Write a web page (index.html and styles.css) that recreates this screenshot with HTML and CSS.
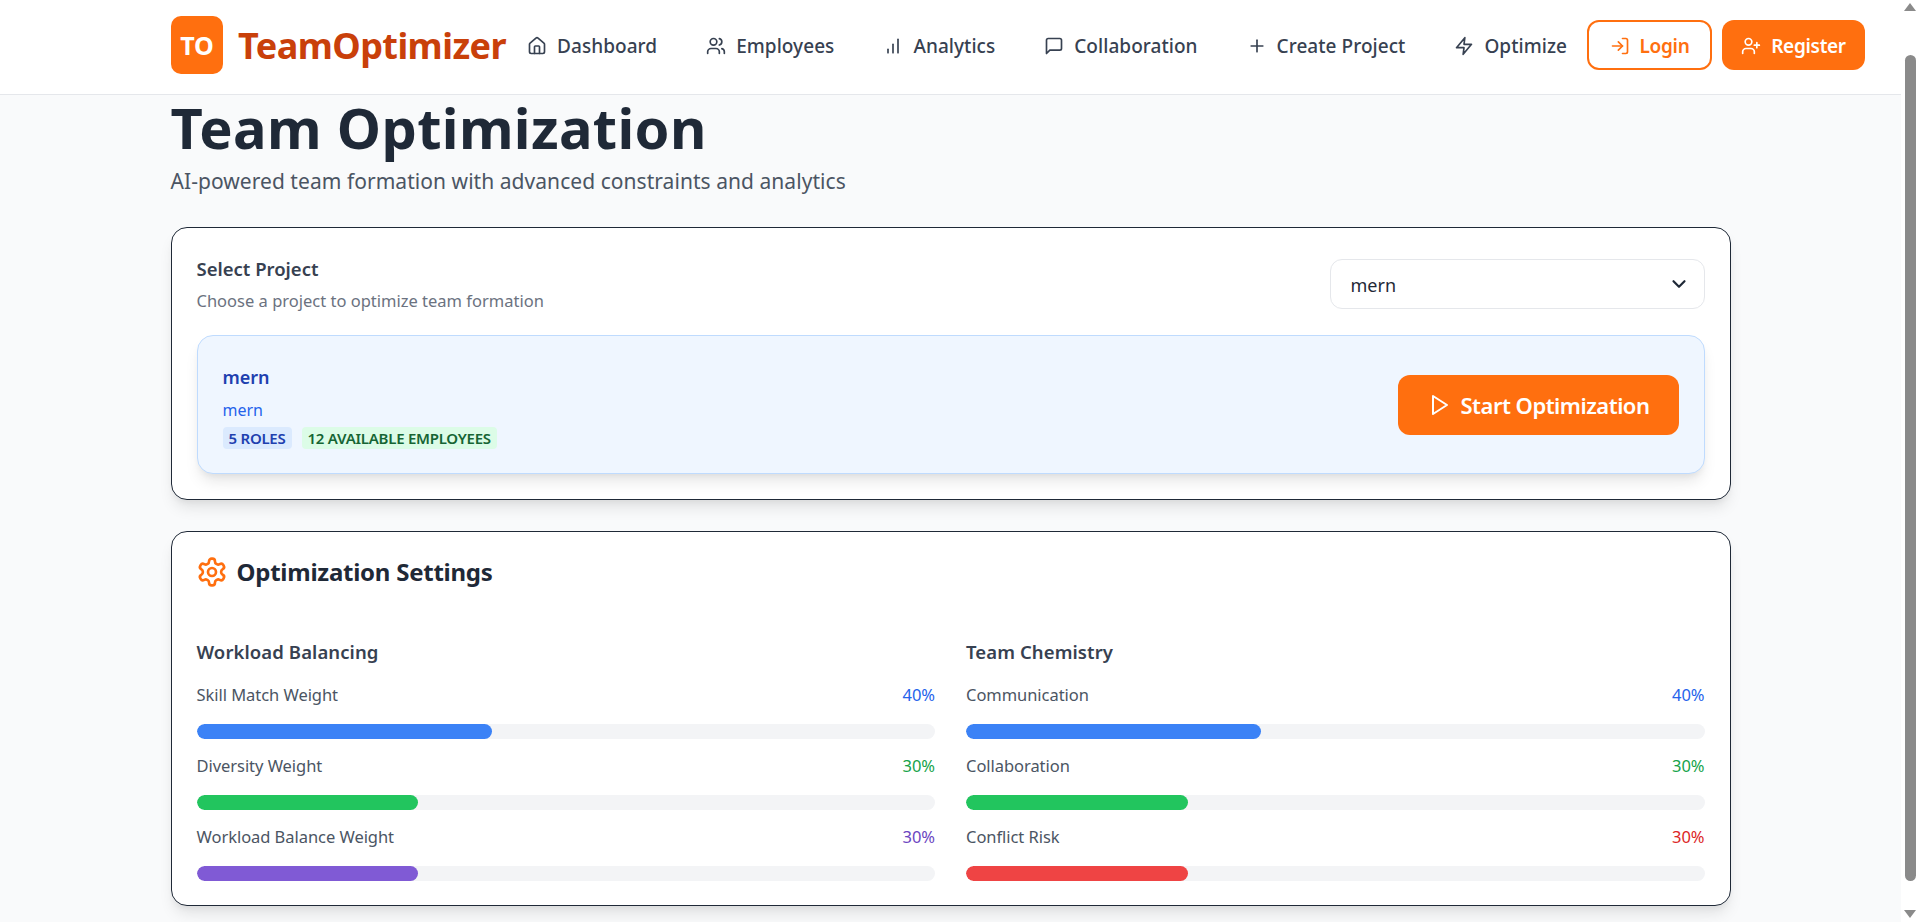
FILE: index.html
```html
<!DOCTYPE html>
<html>

<head>
  <title>TeamOptimizer</title>
  <link rel="stylesheet" href="styles.css">
</head>

<body>
  <div class="page">
    <header class="topbar">
      <a class="brand" href="#">
        <span class="brand-mark">TO</span>
        <span class="brand-name">TeamOptimizer</span>
      </a>
      <nav class="nav">
        <a class="nav-link" href="#">
          <svg class="icon" viewBox="0 0 24 24"><path d="M15 21v-8a1 1 0 0 0-1-1h-4a1 1 0 0 0-1 1v8"/><path d="M3 10a2 2 0 0 1 .709-1.528l7-5.999a2 2 0 0 1 2.582 0l7 5.999A2 2 0 0 1 21 10v9a2 2 0 0 1-2 2H5a2 2 0 0 1-2-2z"/></svg>
          Dashboard
        </a>
        <a class="nav-link" href="#">
          <svg class="icon" viewBox="0 0 24 24"><path d="M16 21v-2a4 4 0 0 0-4-4H6a4 4 0 0 0-4 4v2"/><circle cx="9" cy="7" r="4"/><path d="M22 21v-2a4 4 0 0 0-3-3.87"/><path d="M16 3.13a4 4 0 0 1 0 7.75"/></svg>
          Employees
        </a>
        <a class="nav-link" href="#">
          <svg class="icon" viewBox="0 0 24 24"><path d="M12 20V10"/><path d="M18 20V4"/><path d="M6 20v-4"/></svg>
          Analytics
        </a>
        <a class="nav-link" href="#">
          <svg class="icon" viewBox="0 0 24 24"><path d="M21 15a2 2 0 0 1-2 2H7l-4 4V5a2 2 0 0 1 2-2h14a2 2 0 0 1 2 2z"/></svg>
          Collaboration
        </a>
        <a class="nav-link" href="#">
          <svg class="icon" viewBox="0 0 24 24"><path d="M5 12h14"/><path d="M12 5v14"/></svg>
          Create Project
        </a>
        <a class="nav-link" href="#">
          <svg class="icon" viewBox="0 0 24 24"><path d="M13 2 3 14h9l-1 8 10-12h-9l1-8z"/></svg>
          Optimize
        </a>
      </nav>
      <div class="auth">
        <a class="btn btn-outline" href="#">
          <svg class="icon" viewBox="0 0 24 24"><path d="M15 3h4a2 2 0 0 1 2 2v14a2 2 0 0 1-2 2h-4"/><path d="m10 17 5-5-5-5"/><path d="M15 12H3"/></svg>
          Login
        </a>
        <a class="btn btn-solid" href="#">
          <svg class="icon" viewBox="0 0 24 24"><path d="M16 21v-2a4 4 0 0 0-4-4H6a4 4 0 0 0-4 4v2"/><circle cx="9" cy="7" r="4"/><path d="M19 8v6"/><path d="M22 11h-6"/></svg>
          Register
        </a>
      </div>
    </header>

    <main class="content">
      <h1 class="page-title">Team Optimization</h1>
      <p class="page-sub">AI-powered team formation with advanced constraints and analytics</p>

      <section class="card project-card">
        <div class="project-head">
          <div>
            <h3 class="project-label">Select Project</h3>
            <p class="project-hint">Choose a project to optimize team formation</p>
          </div>
          <div class="select-wrap">
            <select class="select">
              <option>mern</option>
            </select>
            <svg class="select-arrow" viewBox="0 0 24 24"><path d="m6 9 6 6 6-6"/></svg>
          </div>
        </div>
        <div class="project-panel">
          <div class="panel-info">
            <h4 class="panel-title">mern</h4>
            <p class="panel-desc">mern</p>
            <div class="tags">
              <span class="tag tag-blue">5 ROLES</span>
              <span class="tag tag-green">12 AVAILABLE EMPLOYEES</span>
            </div>
          </div>
          <button class="start-btn">
            <svg class="icon icon-play" viewBox="0 0 24 24"><path d="M6 3l14 9-14 9V3z"/></svg>
            Start Optimization
          </button>
        </div>
      </section>

      <section class="card settings-card">
        <h2 class="settings-title">
          <svg class="icon gear" viewBox="0 0 24 24"><path d="M12.22 2h-.44a2 2 0 0 0-2 2v.18a2 2 0 0 1-1 1.73l-.43.25a2 2 0 0 1-2 0l-.15-.08a2 2 0 0 0-2.73.73l-.22.38a2 2 0 0 0 .73 2.73l.15.1a2 2 0 0 1 1 1.72v.51a2 2 0 0 1-1 1.74l-.15.09a2 2 0 0 0-.73 2.73l.22.38a2 2 0 0 0 2.73.73l.15-.08a2 2 0 0 1 2 0l.43.25a2 2 0 0 1 1 1.73V20a2 2 0 0 0 2 2h.44a2 2 0 0 0 2-2v-.18a2 2 0 0 1 1-1.73l.43-.25a2 2 0 0 1 2 0l.15.08a2 2 0 0 0 2.73-.73l.22-.39a2 2 0 0 0-.73-2.73l-.15-.08a2 2 0 0 1-1-1.74v-.5a2 2 0 0 1 1-1.74l.15-.09a2 2 0 0 0 .73-2.73l-.22-.38a2 2 0 0 0-2.73-.73l-.15.08a2 2 0 0 1-2 0l-.43-.25a2 2 0 0 1-1-1.73V4a2 2 0 0 0-2-2z"/><circle cx="12" cy="12" r="3"/></svg>
          Optimization Settings
        </h2>
        <div class="settings-grid">
          <div>
            <h3 class="group-title">Workload Balancing</h3>
            <div class="slider">
              <div class="slider-top"><span>Skill Match Weight</span><span class="pct-blue">40%</span></div>
              <div class="track"><div class="fill fill-blue" style="width: 40%"></div></div>
            </div>
            <div class="slider">
              <div class="slider-top"><span>Diversity Weight</span><span class="pct-green">30%</span></div>
              <div class="track"><div class="fill fill-green" style="width: 30%"></div></div>
            </div>
            <div class="slider">
              <div class="slider-top"><span>Workload Balance Weight</span><span class="pct-purple">30%</span></div>
              <div class="track"><div class="fill fill-purple" style="width: 30%"></div></div>
            </div>
          </div>
          <div>
            <h3 class="group-title">Team Chemistry</h3>
            <div class="slider">
              <div class="slider-top"><span>Communication</span><span class="pct-blue">40%</span></div>
              <div class="track"><div class="fill fill-blue" style="width: 40%"></div></div>
            </div>
            <div class="slider">
              <div class="slider-top"><span>Collaboration</span><span class="pct-green">30%</span></div>
              <div class="track"><div class="fill fill-green" style="width: 30%"></div></div>
            </div>
            <div class="slider">
              <div class="slider-top"><span>Conflict Risk</span><span class="pct-red">30%</span></div>
              <div class="track"><div class="fill fill-red" style="width: 30%"></div></div>
            </div>
          </div>
        </div>
      </section>
    </main>
  </div>

  <div class="scrollbar">
    <span class="arrow-up"></span>
    <span class="thumb"></span>
    <span class="arrow-down"></span>
  </div>
</body>

</html>
```

FILE: styles.css
```css
* {
  box-sizing: border-box;
}

html,
body {
  height: 100%;
}

body {
  background-color: #f9fafb;
  color: #1f2937;
  display: flex;
  font-family: 'Noto Sans', 'Open Sans', sans-serif;
  margin: 0;
  overflow: hidden;
}

a {
  color: inherit;
  text-decoration: none;
}

h1,
h2,
h3,
h4,
p {
  margin: 0;
}

.page {
  flex: 1;
  min-width: 0;
}

/* top bar */

.topbar {
  align-items: center;
  background-color: #fff;
  border-bottom: 1px solid #e5e7eb;
  display: flex;
  height: 95px;
  padding: 0 36px 4px 171px;
}

.brand {
  align-items: center;
  display: flex;
  gap: 15px;
}

.brand-mark {
  align-items: center;
  background-color: #ff6f0f;
  border-radius: 10px;
  color: #fff;
  display: flex;
  font-size: 25px;
  font-weight: 700;
  height: 58px;
  justify-content: center;
  width: 52px;
}

.brand-name {
  color: #c9400a;
  font-size: 36px;
  font-weight: 700;
  letter-spacing: -0.55px;
}

.nav {
  display: flex;
  flex: 1;
  justify-content: space-between;
  margin: 0 20px 0 21px;
}

.nav-link {
  align-items: center;
  color: #374151;
  display: flex;
  font-size: 19px;
  font-weight: 500;
  gap: 10px;
  letter-spacing: 0.05px;
  padding-top: 2px;
}

.icon {
  fill: none;
  flex-shrink: 0;
  height: 20px;
  stroke: currentColor;
  stroke-linecap: round;
  stroke-linejoin: round;
  stroke-width: 2;
  width: 20px;
}

.auth {
  display: flex;
  gap: 10px;
}

.btn {
  align-items: center;
  border-radius: 12px;
  display: flex;
  font-size: 19px;
  font-weight: 600;
  gap: 10px;
  height: 50px;
  justify-content: center;
  letter-spacing: -0.3px;
  padding-top: 1px;
}

.btn-outline {
  background-color: #fff;
  border: 2px solid #ff6f0f;
  color: #ff6f0f;
  width: 125px;
}

.btn-solid {
  background-color: #ff6f0f;
  color: #fff;
  width: 143px;
}

/* main column */

.content {
  margin: 0 auto;
  width: 1560px;
}

.page-title {
  color: #1f2937;
  font-size: 56px;
  font-weight: 700;
  letter-spacing: 0.35px;
  line-height: 64px;
}

.page-sub {
  color: #4b5563;
  font-size: 21px;
  letter-spacing: 0.05px;
  line-height: 28px;
  margin: 8px 0 32px;
}

.card {
  background-color: #fff;
  border: 1px solid #1f2937;
  border-radius: 16px;
  box-shadow: 0 10px 15px -3px rgba(0, 0, 0, 0.1), 0 4px 6px -2px rgba(0, 0, 0, 0.05);
  padding: 25px;
}

.project-card {
  height: 273px;
  margin-bottom: 31px;
}

.project-head {
  align-items: flex-start;
  display: flex;
  justify-content: space-between;
  margin-bottom: 22px;
}

.project-label {
  color: #374151;
  font-size: 18.5px;
  font-weight: 600;
  line-height: 26px;
  margin-top: 3px;
}

.project-hint {
  color: #6b7280;
  font-size: 16.5px;
  line-height: 24px;
  margin-top: 7px;
}

.select-wrap {
  margin-top: 6px;
  position: relative;
  width: 375px;
}

.select {
  appearance: none;
  background-color: #fff;
  border: 1px solid #e5e7eb;
  border-radius: 12px;
  color: #1f2937;
  display: block;
  font-family: inherit;
  font-size: 18px;
  height: 50px;
  padding: 1px 20px 0;
  width: 100%;
}

.select-arrow {
  fill: none;
  height: 22px;
  pointer-events: none;
  position: absolute;
  right: 15px;
  stroke: #1f2937;
  stroke-linecap: round;
  stroke-linejoin: round;
  stroke-width: 2.4;
  top: 14px;
  width: 22px;
}

.project-panel {
  align-items: center;
  background-color: #eff6ff;
  border: 1px solid #bfdbfe;
  border-radius: 16px;
  box-shadow: 0 10px 15px -3px rgba(0, 0, 0, 0.1), 0 4px 6px -2px rgba(0, 0, 0, 0.05);
  display: flex;
  height: 139px;
  justify-content: space-between;
  padding: 0 25px;
}

.panel-info {
  margin-top: 4px;
}

.panel-title {
  color: #1e40af;
  font-size: 18px;
  font-weight: 600;
  line-height: 26px;
}

.panel-desc {
  color: #2563eb;
  font-size: 16px;
  line-height: 24px;
  margin-top: 8px;
}

.tags {
  display: flex;
  gap: 10px;
  margin-top: 5px;
}

.tag {
  border-radius: 4px;
  font-size: 15px;
  font-weight: 600;
  letter-spacing: -0.25px;
  line-height: 22px;
  padding: 0 6px;
}

.tag-blue {
  background-color: #dbeafe;
  color: #1e40af;
}

.tag-green {
  background-color: #dcfce7;
  color: #166534;
}

.start-btn {
  align-items: center;
  background-color: #ff6f0f;
  border: none;
  border-radius: 12px;
  color: #fff;
  display: flex;
  font-family: inherit;
  font-size: 22px;
  font-weight: 600;
  gap: 10px;
  height: 60px;
  justify-content: center;
  letter-spacing: -0.5px;
  width: 281px;
}

.icon-play {
  height: 24px;
  width: 24px;
}

.settings-card {
  height: 375px;
}

.settings-title {
  align-items: center;
  color: #1f2937;
  display: flex;
  font-size: 24px;
  font-weight: 700;
  gap: 9px;
  height: 30px;
  letter-spacing: -0.25px;
  line-height: 30px;
}

.gear {
  color: #ff6f0f;
  height: 32px;
  margin-left: -1px;
  width: 32px;
}

.settings-grid {
  display: grid;
  gap: 31px;
  grid-template-columns: 1fr 1fr;
  margin-top: 51px;
}

.group-title {
  color: #374151;
  font-size: 18.5px;
  font-weight: 600;
  letter-spacing: 0.1px;
  line-height: 26px;
  margin-top: 1px;
}

.slider {
  margin-top: 18px;
}

.slider+.slider {
  margin-top: 15px;
}

.slider-top {
  color: #4b5563;
  display: flex;
  font-size: 16.5px;
  justify-content: space-between;
  letter-spacing: -0.05px;
  line-height: 24px;
  margin-bottom: 17px;
}

.track {
  background-color: #f3f4f6;
  border-radius: 8px;
  height: 15px;
  overflow: hidden;
}

.fill {
  border-radius: 8px;
  height: 100%;
}

.fill-blue {
  background-color: #3b82f6;
}

.fill-green {
  background-color: #22c55e;
}

.fill-purple {
  background-color: #805ad5;
}

.fill-red {
  background-color: #ef4444;
}

.pct-blue {
  color: #2563eb;
}

.pct-green {
  color: #16a34a;
}

.pct-purple {
  color: #6b46c1;
}

.pct-red {
  color: #dc2626;
}

/* window scrollbar, drawn because the shot has one */

.scrollbar {
  align-items: center;
  background-color: #fff;
  display: flex;
  flex-direction: column;
  flex-shrink: 0;
  height: 100%;
  padding: 3px 0 4px;
  width: 18px;
}

.arrow-up {
  border-bottom: 8px solid #8a8a8a;
  border-left: 6px solid transparent;
  border-right: 6px solid transparent;
  margin-bottom: 44px;
}

.thumb {
  background-color: #8a8a8a;
  border-radius: 6px;
  flex: 1;
  margin-bottom: 29px;
  width: 11px;
}

.arrow-down {
  border-left: 6px solid transparent;
  border-right: 6px solid transparent;
  border-top: 8px solid #8a8a8a;
}
```
